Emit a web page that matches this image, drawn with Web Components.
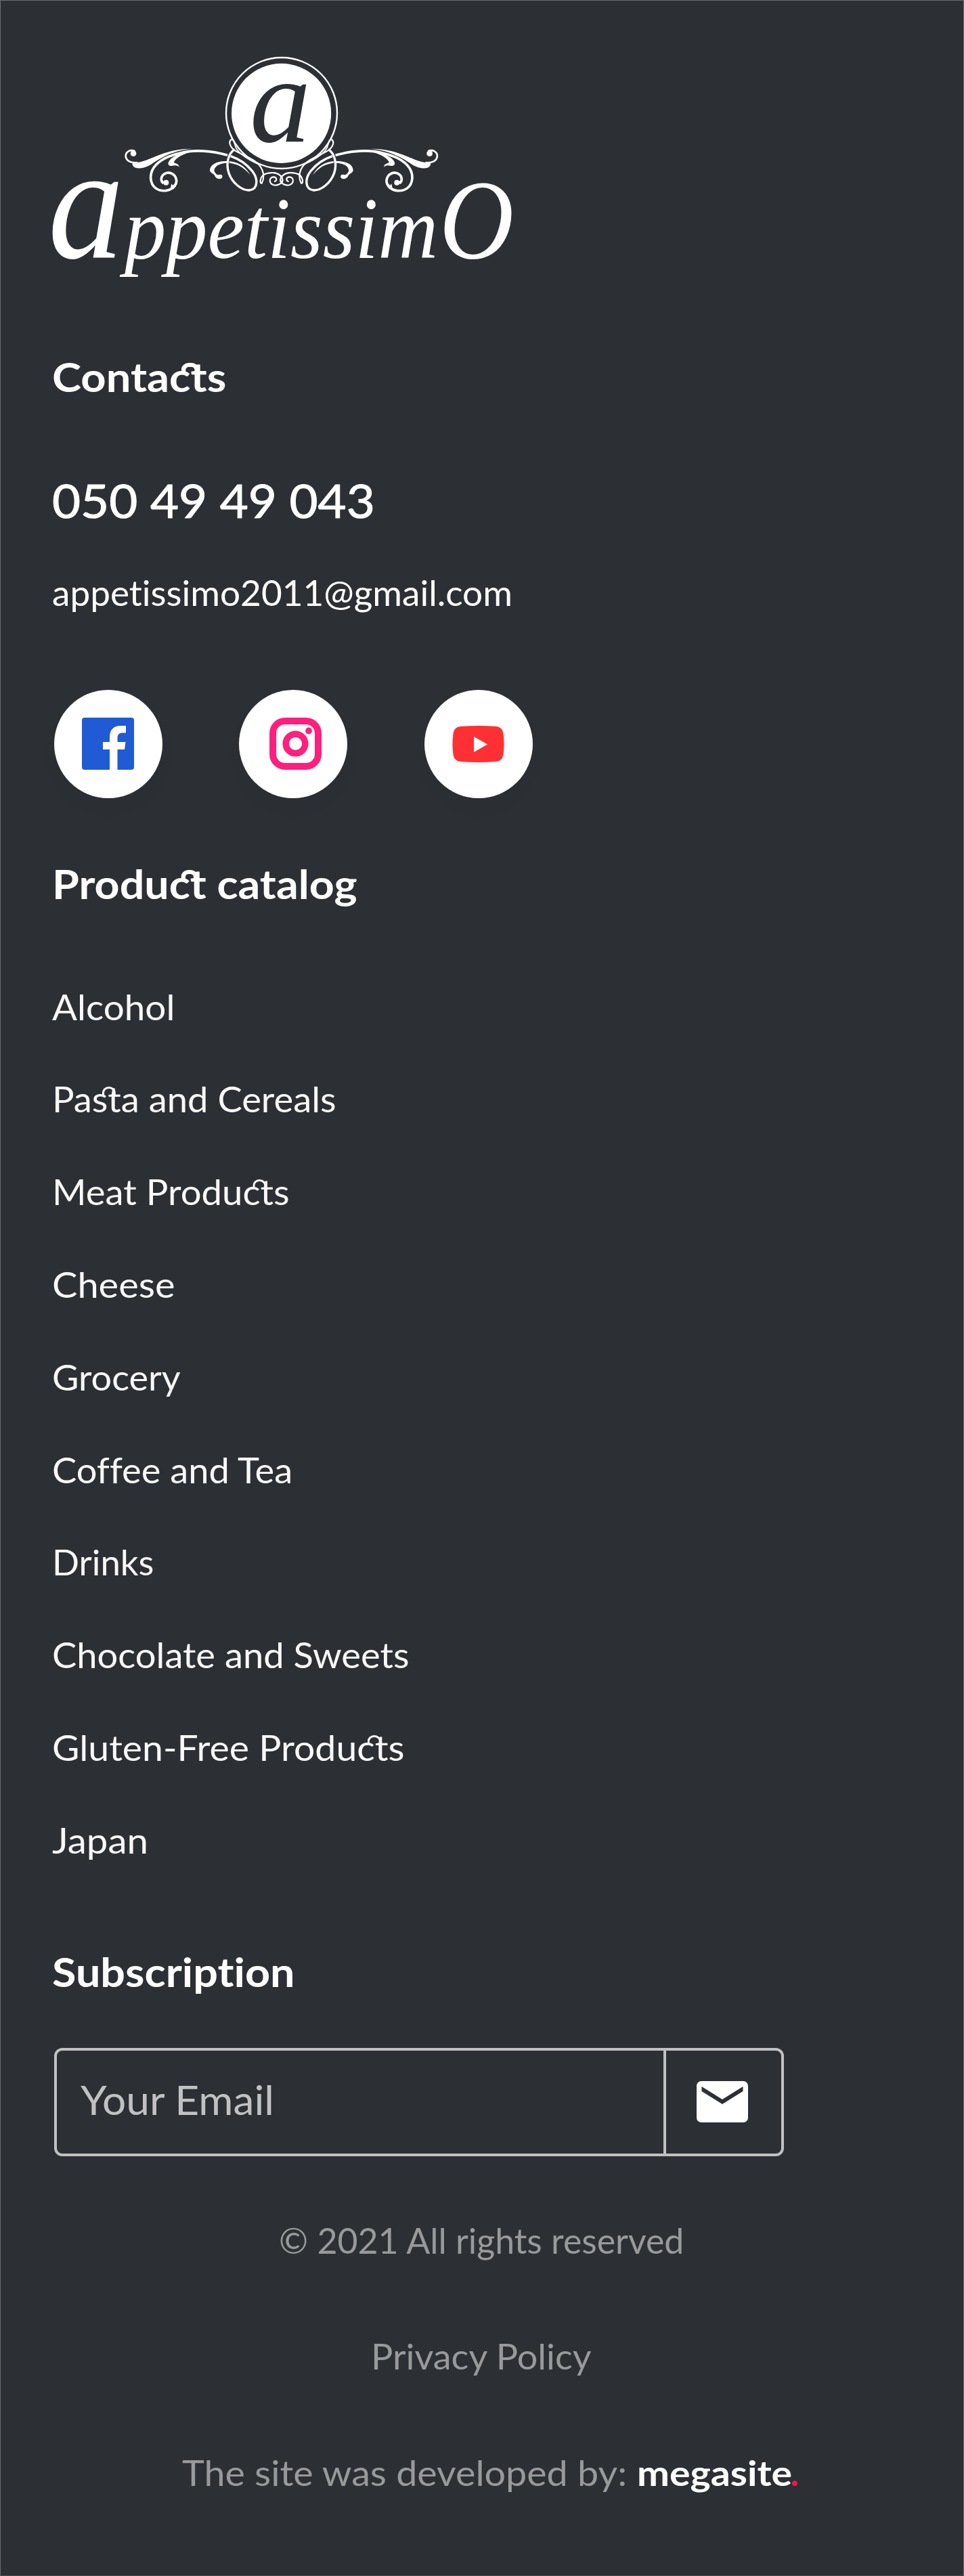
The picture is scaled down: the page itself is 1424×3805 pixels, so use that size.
<!DOCTYPE html>
<html lang="en">
<head>
<meta charset="utf-8">
<title>Appetissimo</title>
<style>
body {
  margin: 0;
  background: #2c2f34;
}
</style>
</head>
<body>
<site-footer></site-footer>

<script>
// One line of text, stretched so that its ink is `ink` pixels wide.
class FitLine extends HTMLElement {
  constructor() {
    super();
    this.attachShadow({ mode: 'open' }).innerHTML = `
<style>
:host {
  display: block;
  white-space: nowrap;
  font-variant-ligatures: none;
}
span {
  display: inline-block;
  transform-origin: 0 0;
}
</style>
<span><slot></slot></span>
`;
  }

  connectedCallback() {
    const ink = Number(this.getAttribute('ink'));
    const style = getComputedStyle(this);
    const ctx = document.createElement('canvas').getContext('2d');
    ctx.font = `${style.fontWeight} ${style.fontSize} ${style.fontFamily}`;
    const box = ctx.measureText(this.textContent);
    const scale = ink / (box.actualBoundingBoxRight + box.actualBoundingBoxLeft);
    this.style.width = `${ink}px`;
    this.shadowRoot.querySelector('span').style.transform = `scaleX(${scale.toFixed(4)})`;
  }
}

// Letter pair joined by a small arc, as in "ct" and "st".
class JoinedPair extends HTMLElement {
  constructor() {
    super();
    this.attachShadow({ mode: 'open' }).innerHTML = `<style>
:host {
  position: relative;
}
i {
  position: absolute;
  left: 0.27em;
  top: 0.245em;
  width: var(--pair-width, 0.37em);
  height: 0.26em;
  box-sizing: border-box;
  border: var(--pair-stroke, 0.075em) solid currentColor;
  border-bottom: 0;
  border-radius: 0.18em 0.18em 0 0;
}
</style><slot></slot><i></i>`;
  }
}

class BrandLogo extends HTMLElement {
  constructor() {
    super();
    this.attachShadow({ mode: 'open' }).innerHTML = `
<style>
:host {
  display: block;
  height: 380px;
}
svg {
  display: block;
  overflow: visible;
}
text {
  font-family: "Liberation Serif", serif;
  font-style: italic;
}
</style>
<svg width="720" height="380" viewBox="60 70 720 380" fill="#fff">
  <defs>
    <g id="vine" transform="translate(170 200) scale(0.33333)">
      <circle cx="81" cy="80" r="13"/>
      <path d="M88 70C68 60 46 72 47 93C50 112 68 124 100 120" fill="none" stroke="#fff" stroke-width="8"/>
      <path d="M80 122C150 122 210 58 340 59C260 66 200 100 160 128C130 148 90 150 82 138C76 132 74 124 80 122Z"/>
      <path d="M498 88C430 68 350 62 290 78C200 98 156 140 158 190C161 230 190 248 225 245C260 240 276 215 271 195C266 168 238 160 220 170C202 180 200 203 215 212" fill="none" stroke="#fff" stroke-width="11"/>
      <circle cx="226" cy="209" r="12"/>
      <path d="M246 232L250 214L256 222L272 205L268 228Z"/>
      <path d="M350 70C290 75 245 95 236 120C232 132 245 138 256 134C268 130 278 134 284 140C282 126 268 124 260 120C268 100 300 82 350 70Z"/>
      <path d="M498 114C450 112 420 130 420 155C422 168 438 168 442 180C448 194 468 198 475 186C478 174 468 170 458 175C450 176 446 168 440 160C436 140 460 122 498 122ZM506 114C545 118 580 138 599 176C575 145 545 126 506 122Z"/>
      <path d="M530 62C500 80 490 130 505 170C520 210 560 245 595 243C635 238 635 190 605 155C580 125 550 105 512 92" fill="none" stroke="#fff" stroke-width="10"/>
      <path d="M516 18C500 28 510 52 532 68C565 88 622 105 645 140C662 165 660 195 650 212C640 214 642 190 655 176C680 162 722 158 740 188C750 208 725 226 700 219C680 210 682 184 705 184C720 188 716 204 705 204" fill="none" stroke="#fff" stroke-width="6.500"/>
      <path d="M516 18C530 12 528 48 540 62C560 90 600 112 640 130" fill="none" stroke="#fff" stroke-width="5"/>
    </g>
  </defs>
  <circle cx="416" cy="167" r="82" fill="none" stroke="#fff" stroke-width="2.4"/>
  <circle cx="415.6" cy="167.4" r="73.6"/>
  <use href="#vine"/>
  <use href="#vine" transform="translate(831.6 0) scale(-1 1)"/>
  <text x="369" y="208.500" font-size="180" fill="#2c2f34" textLength="90" lengthAdjust="spacingAndGlyphs">a</text>
  <text y="381"><tspan x="71" font-size="240" textLength="112" lengthAdjust="spacingAndGlyphs">a</tspan><tspan x="184" font-size="130" textLength="463" lengthAdjust="spacingAndGlyphs">ppetissim</tspan><tspan x="649" font-size="168" textLength="110" lengthAdjust="spacingAndGlyphs">O</tspan></text>
</svg>
`;
  }
}

class SocialLinks extends HTMLElement {
  constructor() {
    super();
    this.attachShadow({ mode: 'open' }).innerHTML = `
<style>
:host {
  display: flex;
  gap: 113.6px;
}
a {
  display: grid;
  place-items: center;
  width: 160px;
  height: 160px;
  border-radius: 50%;
  background: #fff;
  box-shadow: 0 16px 32px rgba(0, 0, 0, 0.02);
}
.instagram {
  padding-left: 7px;
  width: 153px;
}
</style>
<a>
  <svg width="77" height="77" viewBox="0 0 77 77">
    <rect width="77" height="77" rx="4" fill="#205bd5"/>
    <path d="M41 77V47H31V36H41V29C41 17 48 12 57 12H65V22.500H60C55 22.500 52.500 25 52.500 30V36H64.500L63 47H52.500V77Z" fill="#fff"/>
  </svg>
</a>
<a class="instagram">
  <svg width="77" height="77" viewBox="0 0 77 77" fill="none" stroke="#ff1f7d">
    <rect x="5" y="5" width="67" height="67" rx="18" stroke-width="10"/>
    <circle cx="38.500" cy="38.500" r="14.300" stroke-width="9.500"/>
    <circle cx="58" cy="19.500" r="4.900" fill="#ff1f7d" stroke="none"/>
  </svg>
</a>
<a>
  <svg width="77" height="54" viewBox="0 0 77 54">
    <path d="M12 1Q38.500 -1 65 1Q74 2 75.500 11Q77.500 27 75.500 43Q74 52 65 53Q38.500 55 12 53Q3 52 1.500 43Q-.5 27 1.500 11Q3 2 12 1Z" fill="#ff3033"/>
    <path d="M32 16V39L52 27.500Z" fill="#fff"/>
  </svg>
</a>
`;
  }
}

class SubscribeForm extends HTMLElement {
  constructor() {
    super();
    this.attachShadow({ mode: 'open' }).innerHTML = `
<style>
:host {
  display: flex;
  box-sizing: border-box;
  width: 1078px;
  height: 160px;
  border: 4px solid #c0c1c1;
  border-radius: 12px;
  color: #c0c1c1;
}
.field {
  flex: 1;
  padding: 36px 0 0 35px;
  font-size: 60px;
  line-height: 72px;
}
.send {
  display: grid;
  place-items: center;
  width: 170px;
  border-left: 4px solid #c0c1c1;
}
svg {
  margin-right: 4px;
}
</style>
<div class="field"><slot></slot></div>
<div class="send">
  <svg width="76" height="61" viewBox="0 0 76 61">
    <rect width="76" height="61" rx="7" fill="#fff"/>
    <path d="M7.500 8L38 27L68.500 8V15L38 34L7.500 15Z" fill="#2c2f34"/>
  </svg>
</div>
`;
  }
}

class SiteFooter extends HTMLElement {
  constructor() {
    super();
    this.attachShadow({ mode: 'open' }).innerHTML = `
<style>
:host {
  display: flex;
  flex-direction: column;
  box-sizing: border-box;
  height: 3805px;
  padding: 69px 0 0 76px;
  border: 1px solid #6b6e72;
  border-bottom-color: #484b4f;
  font-family: Lato, "Open Sans", sans-serif;
  color: #fff;
}
brand-logo {
  margin-left: -17px;
}
.title {
  font-size: 59px;
  font-weight: 700;
  line-height: 72px;
  --pair-stroke: 0.11em;
  --pair-width: 0.4em;
}
.contacts {
  margin-top: 71.200px;
}
.phone {
  margin-top: 106px;
  font-size: 68px;
  line-height: 80px;
  -webkit-text-stroke: 1px #fff;
}
.mail {
  margin-top: 63.400px;
  font-size: 52px;
  line-height: 64px;
}
social-links {
  margin: 112px 0 91.500px 2.600px;
}
nav {
  margin: 76.600px 0 90.400px;
  font-size: 51.500px;
  line-height: 136.800px;
  color: #f8f8f8;
}
subscribe-form {
  margin: 75.500px 0 92.500px 3px;
}
.legal {
  display: flex;
  flex-direction: column;
  gap: 107.300px;
  margin-left: -81px;
  align-items: center;
  font-size: 52px;
  line-height: 64px;
  color: #98999b;
}
.credit {
  display: flex;
  margin-left: 30px;
  gap: 17px;
}
.studio {
  display: flex;
  gap: 2px;
  font-weight: 700;
  color: #fff;
}
.dot {
  color: #f5174f;
}
</style>
<brand-logo></brand-logo>
<fit-line class="title contacts" ink="254">Conta<joined-pair>ct</joined-pair>s</fit-line>
<fit-line class="phone" ink="471">050 49 49 043</fit-line>
<fit-line class="mail" ink="677">appetissimo2011@gmail.com</fit-line>
<social-links></social-links>
<fit-line class="title" ink="446">Produ<joined-pair>ct</joined-pair> catalog</fit-line>
<nav>
  <fit-line ink="178">Alcohol</fit-line>
  <fit-line ink="414">Pa<joined-pair>st</joined-pair>a and Cereals</fit-line>
  <fit-line ink="345">Meat Produ<joined-pair>ct</joined-pair>s</fit-line>
  <fit-line ink="178">Cheese</fit-line>
  <fit-line ink="188">Grocery</fit-line>
  <fit-line ink="350">Coffee and Tea</fit-line>
  <fit-line ink="145">Drinks</fit-line>
  <fit-line ink="524">Chocolate and Sweets</fit-line>
  <fit-line ink="517">Gluten-Free Produ<joined-pair>ct</joined-pair>s</fit-line>
  <fit-line ink="139">Japan</fit-line>
</nav>
<fit-line class="title" ink="355">Subscription</fit-line>
<subscribe-form><fit-line ink="283">Your Email</fit-line></subscribe-form>
<div class="legal">
  <fit-line ink="595">© 2021 All rights reserved</fit-line>
  <fit-line ink="323">Privacy Policy</fit-line>
  <div class="credit">
    <fit-line ink="655">The site was developed by:</fit-line>
    <div class="studio"><fit-line ink="225">megasite</fit-line><span class="dot">.</span></div>
  </div>
</div>
`;
  }
}

window.customElements.define('joined-pair', JoinedPair);
window.customElements.define('brand-logo', BrandLogo);
window.customElements.define('social-links', SocialLinks);
window.customElements.define('subscribe-form', SubscribeForm);
window.customElements.define('site-footer', SiteFooter);
window.customElements.define('fit-line', FitLine);
</script>
</body>
</html>
